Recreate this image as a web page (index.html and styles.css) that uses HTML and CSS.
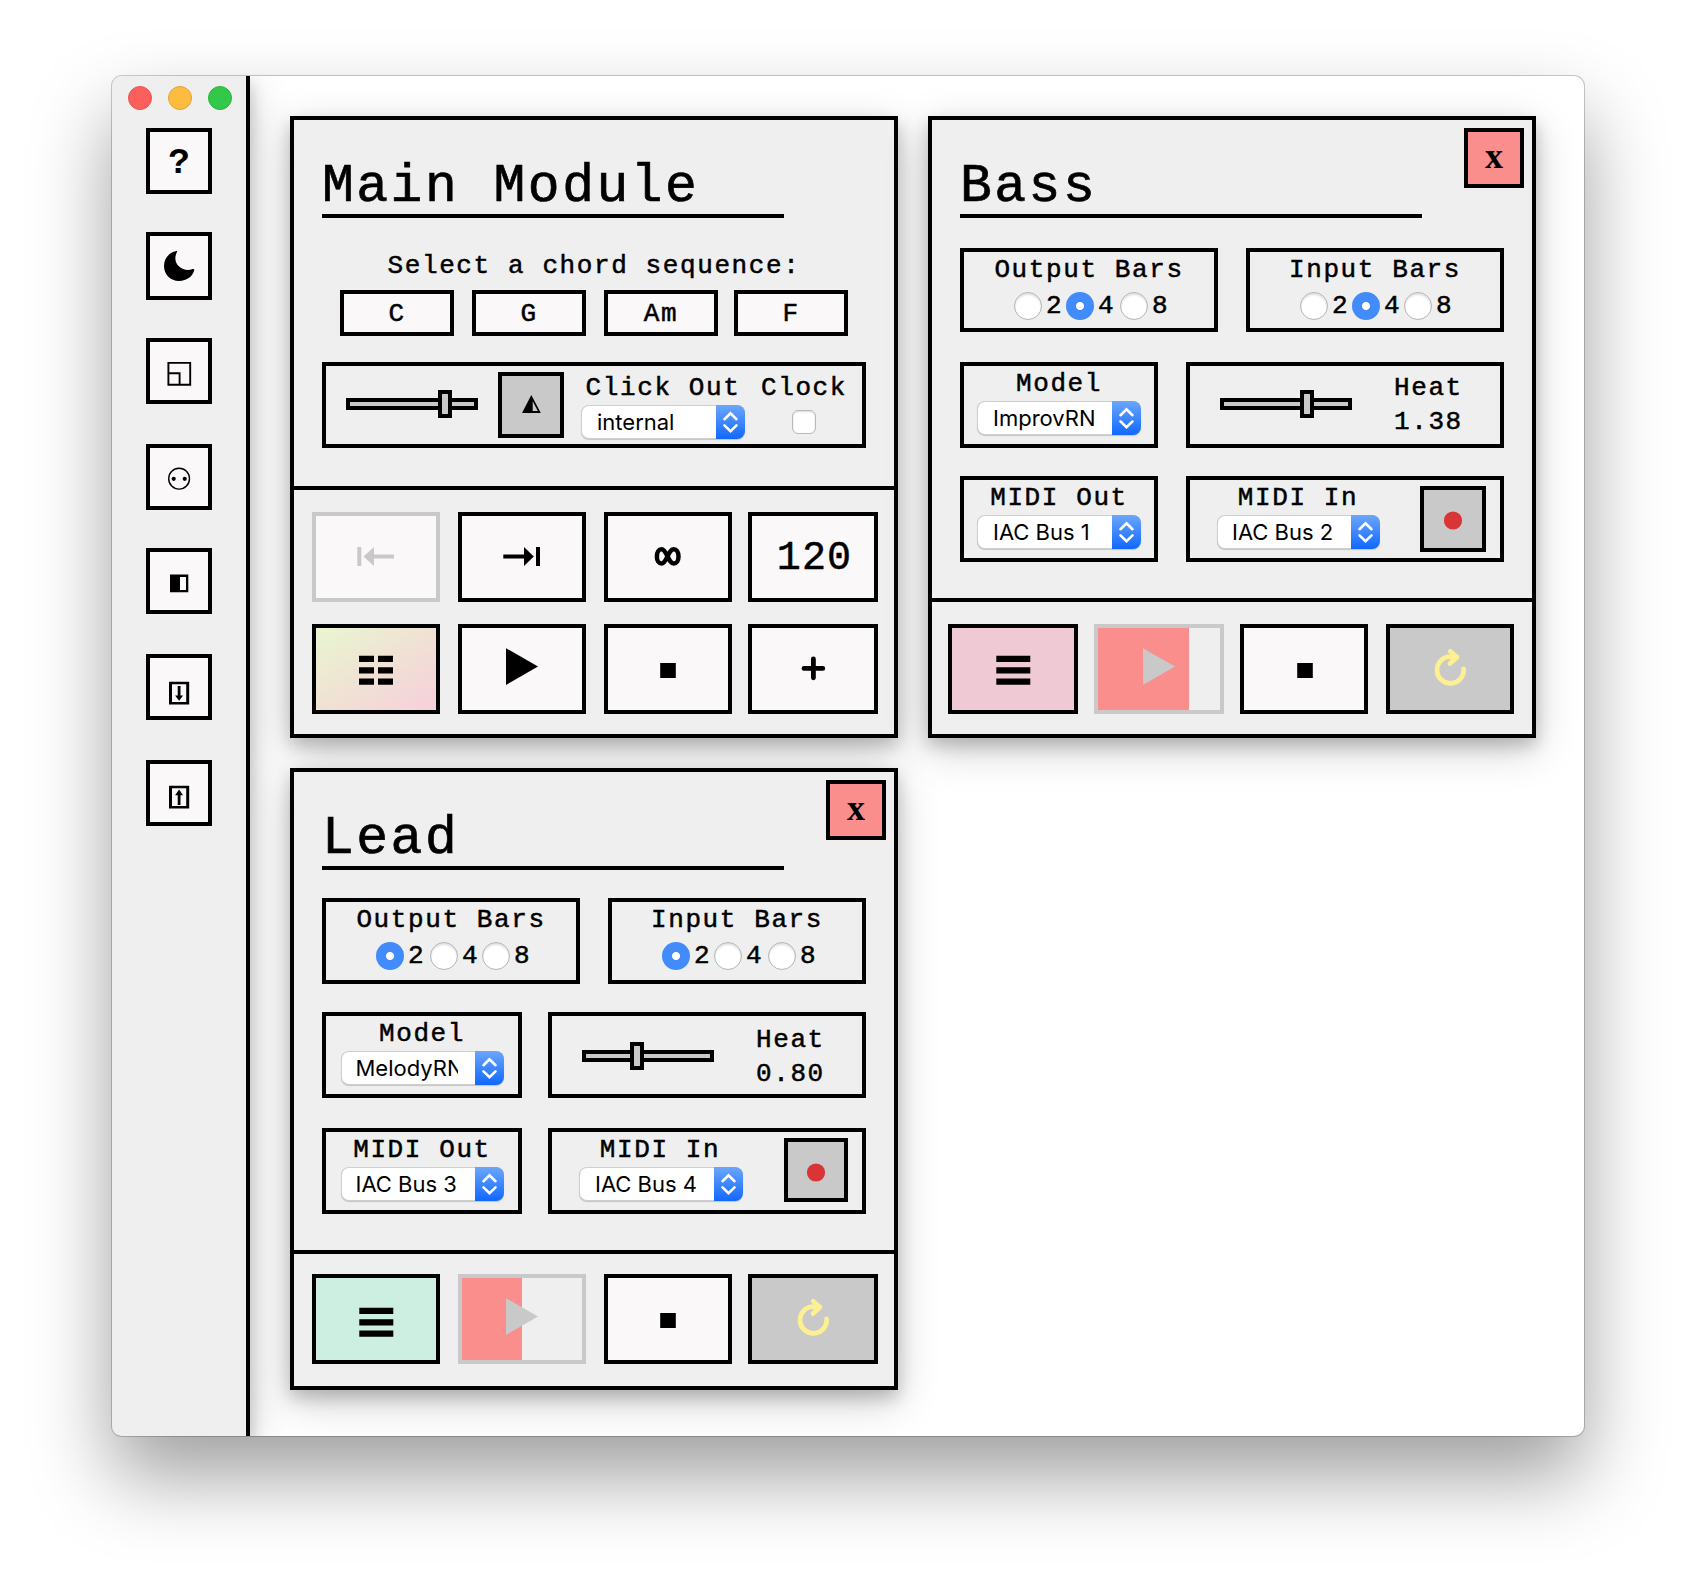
FILE: index.html
```html
<!DOCTYPE html>
<html lang="en">
<head>
<meta charset="utf-8">
<title>Modules</title>
<link rel="stylesheet" href="styles.css">
</head>
<body>
<svg class="defs" width="0" height="0">
  <symbol id="chevrons" viewBox="0 0 29 34"><path d="M8.5 14.2 14.5 8.4 20.5 14.2M8.5 20.4 14.5 26.2 20.5 20.4" fill="none" stroke="#fff" stroke-width="2.6" stroke-linecap="round"/></symbol>
  <symbol id="lines" viewBox="0 0 120 82"><path d="M43.3 27.7h34v6.2h-34zM43.3 39.2h34v6.2h-34zM43.3 50.6h34v6.2h-34z"/></symbol>
  <symbol id="play" viewBox="0 0 120 82"><path d="M44 20.2 76 38.6 44 57z"/></symbol>
  <symbol id="stop" viewBox="0 0 120 82"><path d="M52.2 35h15.6v15H52.2z"/></symbol>
  <symbol id="loop" viewBox="0 0 120 82"><path d="M73.6 41A13.3 13.3 0 1 1 60.3 28.7L67 29M60.2 23.3 67 29.2 60 35.6" fill="none" stroke="#fcf093" stroke-width="4.8" stroke-linecap="round" stroke-linejoin="round"/></symbol>
  <symbol id="record" viewBox="0 0 58 58"><circle cx="29" cy="30.5" r="9.1" fill="#d93436"/></symbol>
</svg>
<div class="window">
  <nav class="sidebar">
    <div class="lights"><i class="red"></i><i class="amber"></i><i class="green"></i></div>
    <button class="tool help">?</button>
    <button class="tool tall"><svg viewBox="0 0 58 60"><path d="M26.3 15.1C18.5 16.5 14 23 14 30C14 38.5 20.5 45 29 45C37 45 43 40 44.2 34.3C44.4 33.2 43.6 32.7 42.6 33C33 37 21 27.5 26.9 16.3C27.3 15.4 27.2 14.9 26.3 15.1Z"/></svg></button>
    <button class="tool"><svg viewBox="0 0 58 58"><path d="M18.4 20.9h21.8v21.8H18.4zM18.4 31.3h11.2v11.4" fill="none" stroke="#000" stroke-width="1.9"/></svg></button>
    <button class="tool"><svg viewBox="0 0 58 58"><circle cx="29.1" cy="30.7" r="10.4" fill="none" stroke="#000" stroke-width="1.4"/><circle cx="23.7" cy="30.8" r="2.1"/><circle cx="34.7" cy="30.8" r="2.1"/></svg></button>
    <button class="tool"><svg viewBox="0 0 58 58"><path d="M20 22.5h18.3v17.8H20zM30 25v13h6V25z" fill-rule="evenodd"/></svg></button>
    <button class="tool late"><svg viewBox="0 0 58 58"><path d="M19 23.8h20.2v22.8H19zM22 26.3v17.8h14.2V26.3zM27.7 28h2.8v9.5h2.6L29.1 42.7 25.1 37.5h2.6z" fill-rule="evenodd"/></svg></button>
    <button class="tool late"><svg viewBox="0 0 58 58"><path d="M19 21.8h20.2v22.8H19zM22 24.3v17.8h14.2V24.3zM27.7 41h2.8v-9.8h2.6L29.1 25.5 25.1 31.2h2.6z" fill-rule="evenodd"/></svg></button>
  </nav>
  <main class="modules">
    <section class="module main">
      <div class="body">
        <h1>Main Module</h1>
        <div class="label prompt">Select a chord sequence:</div>
        <div class="chords"><div>C</div><div>G</div><div>Am</div><div>F</div></div>
        <div class="box click">
          <div class="slider"><span class="thumb" style="left: 88px"></span></div>
          <button class="square"><svg viewBox="0 0 58 58"><path d="M29.3 19 38.8 37H20zM30.7 25.2V35H35.8z" fill-rule="evenodd"/></svg></button>
          <div class="col"><div class="label">Click Out</div><div class="select"><span>internal</span><b><svg><use href="#chevrons"/></svg></b></div></div>
          <div class="col clock"><div class="label">Clock</div><div class="check"></div></div>
        </div>
      </div>
      <div class="transport">
        <button class="off"><svg viewBox="0 0 120 82"><path d="M41.3 31h4v19h-4zM47.5 40.5 58 31v7.6h20v3.8H58V50z"/></svg></button>
        <button><svg viewBox="0 0 120 82"><path d="M78 31h-4v19h4zM71.8 40.5 62 31v7.6H41.3v3.8H62V50z"/></svg></button>
        <button><svg viewBox="0 0 120 82"><path d="M48.9 40.4C48.9 36 50.8 33.3 53.6 33.3C58.8 33.3 60.2 47.5 65.7 47.5C68.6 47.5 70.5 44.8 70.5 40.4C70.5 36 68.6 33.3 65.7 33.3C60.2 33.3 58.8 47.5 53.6 47.5C50.8 47.5 48.9 44.8 48.9 40.4Z" fill="none" stroke="#000" stroke-width="4.5"/></svg></button>
        <button class="tempo">120</button>
        <button class="blend"><svg viewBox="0 0 120 82"><path d="M43 27.8h15V34H43zM62 27.8h15V34H62zM43 39.3h15v6.2H43zM62 39.3h15v6.2H62zM43 50.6h15v6.2H43zM62 50.6h15v6.2H62z"/></svg></button>
        <button><svg><use href="#play"/></svg></button>
        <button><svg><use href="#stop"/></svg></button>
        <button><svg viewBox="0 0 120 82"><path d="M60.4 31v18.8M51 40.4h18.8" stroke="#000" stroke-width="4.8" stroke-linecap="round"/></svg></button>
      </div>
    </section>

    <section class="module bass">
      <button class="close">x</button>
      <div class="body">
        <h1>Bass</h1>
        <div class="row bars">
          <div class="box"><div class="label">Output Bars</div><div class="radios"><i></i><span>2</span><i class="on"></i><span>4</span><i class="push"></i><span>8</span></div></div>
          <div class="box"><div class="label">Input Bars</div><div class="radios"><i></i><span>2</span><i class="on"></i><span>4</span><i></i><span>8</span></div></div>
        </div>
        <div class="row model">
          <div class="box"><div class="label">Model</div><div class="select"><span>ImprovRN</span><b><svg><use href="#chevrons"/></svg></b></div></div>
          <div class="box heat"><div class="slider"><span class="thumb" style="left: 76px"></span></div><div class="value">Heat<br>1.38</div></div>
        </div>
        <div class="row midi">
          <div class="box"><div class="label">MIDI Out</div><div class="select"><span>IAC Bus 1</span><b><svg><use href="#chevrons"/></svg></b></div></div>
          <div class="box in"><div class="col"><div class="label">MIDI In</div><div class="select narrow"><span>IAC Bus 2</span><b><svg><use href="#chevrons"/></svg></b></div></div><button class="square"><svg><use href="#record"/></svg></button></div>
        </div>
      </div>
      <div class="transport">
        <button class="menu"><svg><use href="#lines"/></svg></button>
        <button class="off playing"><span class="progress" style="width: 91px"></span><svg><use href="#play"/></svg></button>
        <button class="halt"><svg><use href="#stop"/></svg></button>
        <button class="grey"><svg><use href="#loop"/></svg></button>
      </div>
    </section>

    <section class="module lead">
      <button class="close">x</button>
      <div class="body">
        <h1>Lead</h1>
        <div class="row bars">
          <div class="box"><div class="label">Output Bars</div><div class="radios"><i class="on"></i><span>2</span><i class="push"></i><span>4</span><i></i><span>8</span></div></div>
          <div class="box"><div class="label">Input Bars</div><div class="radios"><i class="on"></i><span>2</span><i></i><span>4</span><i class="push"></i><span>8</span></div></div>
        </div>
        <div class="row model">
          <div class="box"><div class="label">Model</div><div class="select narrow"><span>MelodyRN</span><b><svg><use href="#chevrons"/></svg></b></div></div>
          <div class="box heat"><div class="slider"><span class="thumb" style="left: 44px"></span></div><div class="value">Heat<br>0.80</div></div>
        </div>
        <div class="row midi">
          <div class="box"><div class="label">MIDI Out</div><div class="select narrow"><span>IAC Bus 3</span><b><svg><use href="#chevrons"/></svg></b></div></div>
          <div class="box in"><div class="col"><div class="label">MIDI In</div><div class="select"><span>IAC Bus 4</span><b><svg><use href="#chevrons"/></svg></b></div></div><button class="square"><svg><use href="#record"/></svg></button></div>
        </div>
      </div>
      <div class="transport">
        <button class="menu"><svg><use href="#lines"/></svg></button>
        <button class="off playing"><span class="progress" style="width: 60px"></span><svg><use href="#play"/></svg></button>
        <button><svg><use href="#stop"/></svg></button>
        <button class="grey"><svg><use href="#loop"/></svg></button>
      </div>
    </section>
  </main>
</div>
</body>
</html>
```
FILE: styles.css
```css
* { box-sizing: border-box; }

body {
  margin: 0;
  height: 1584px;
  padding: 76px 112px 0;
  background: #fff;
  color: #000;
  font-family: "Liberation Mono", monospace;
  font-size: 26px;
  letter-spacing: 1.6px;
  overflow: hidden;
}

.defs { position: absolute; }

svg { display: block; flex: none; }

button {
  display: flex;
  align-items: center;
  justify-content: center;
  padding: 0;
  border: 4px solid #000;
  border-radius: 0;
  background: #faf8f9;
  color: #000;
  font: inherit;
}

.window {
  display: flex;
  width: 1472px;
  height: 1360px;
  border-radius: 10px;
  background: #fff;
  overflow: hidden;
  box-shadow: 0 0 0 1px rgba(0, 0, 0, .2), 0 40px 80px rgba(0, 0, 0, .38);
}

/* Sidebar */
.sidebar {
  display: flex;
  flex-direction: column;
  align-items: center;
  gap: 38px;
  width: 138px;
  padding-top: 10px;
  border-right: 4px solid #000;
  background: #efefef;
  box-shadow: 0 8px 16px rgba(0, 0, 0, .2), 0 12px 40px rgba(0, 0, 0, .19);
}

.lights {
  display: flex;
  gap: 16px;
  margin: 0 0 -20px 2px;
  height: 24px;
  width: 104px;
}

.lights i { width: 24px; height: 24px; border-radius: 50%; border: 1px solid; }
.lights .red { background: #fc605c; border-color: #e9534f; }
.lights .amber { background: #fdbc40; border-color: #e3a233; }
.lights .green { background: #34c84a; border-color: #29b33c; }

.tool { width: 66px; height: 66px; }
.tool svg { width: 58px; height: 58px; }
.tool.tall { height: 68px; }
.tool.tall svg { height: 60px; }
.tool.late { margin-top: 2px; }
.tool:nth-child(5) { margin-top: 2px; }
.tool.help { padding-top: 5px; font-size: 36px; font-weight: bold; letter-spacing: 0; }

/* Module grid */
.modules {
  flex: 1;
  display: grid;
  grid-template-columns: 608px 608px;
  grid-auto-rows: 622px;
  gap: 30px;
  padding: 40px;
}

.module {
  position: relative;
  border: 4px solid #000;
  background: #efefef;
  box-shadow: 0 8px 16px rgba(0, 0, 0, .2), 0 12px 40px rgba(0, 0, 0, .19);
}

.body { height: 482px; padding: 38px 28px 0; border-bottom: 4px solid #000; }
.main .body { height: 370px; }

h1 {
  width: 462px;
  height: 60px;
  margin: 0;
  border-bottom: 4px solid #000;
  font-size: 53px;
  font-weight: normal;
  line-height: 58px;
  letter-spacing: 2.5px;
  -webkit-text-stroke: .7px #000;
}

.close {
  position: absolute;
  top: 8px;
  right: 8px;
  width: 60px;
  height: 60px;
  background: #f98e8d;
  font-family: "Liberation Serif", serif;
  font-size: 36px;
  font-weight: bold;
  line-height: 40px;
  letter-spacing: 0;
  padding-bottom: 5px;
}

.label { line-height: 28px; padding-bottom: 2px; text-align: center; white-space: nowrap; }
.label, .value, .radios span, .chords, .tempo { -webkit-text-stroke: .5px #000; }
.box { height: 86px; border: 4px solid #000; padding-top: 4px; }

.prompt { margin-top: 34px; }
.chords { display: grid; grid-template-columns: 114px 114px 114px 114px; gap: 18px; width: 508px; margin: 8px 0 26px 18px; }
.chords div { height: 46px; border: 4px solid #000; background: #faf8f9; line-height: 40px; text-align: center; }
.chords div:last-child { margin: 0 2px 0 -2px; }

.click { display: flex; padding: 0 0 0 20px; }
.click .square { margin: 6px 17px 0 20px; }
.col { width: 164px; }
.click .col { padding-top: 8px; margin-right: 15px; }
.click .clock { width: 88px; margin: 0; }

.slider { position: relative; flex: none; width: 132px; height: 12px; margin-top: 32px; border: 4px solid #000; background: #c9c9c9; }
.thumb { position: absolute; top: -12px; width: 14px; height: 28px; border: 4px solid #000; background: #c9c9c9; }

.square { flex: none; width: 66px; height: 66px; background: #c9c9c9; }
.square svg { width: 58px; height: 58px; }

.check { width: 24px; height: 24px; margin: 6px auto 0; border: 1px solid #b9b9b9; border-radius: 6px; background: #fff; box-shadow: inset 0 1px 2px rgba(0, 0, 0, .15); }

.select {
  display: flex;
  width: 162px;
  height: 32px;
  margin: 2px auto 0;
  padding-left: 15px;
  border-radius: 7px;
  background: #fff;
  box-shadow: 0 0 0 1px #cfcfcf, 0 1px 1px 1px rgba(0, 0, 0, .18);
  font: 22px/32px Inter, sans-serif;
  letter-spacing: 0;
}

.select.narrow { width: 161px; padding-left: 14px; }
.select span { flex: none; width: 102px; overflow: hidden; white-space: nowrap; }
.select b { width: 29px; height: 34px; margin: -1px -1px 0 auto; border-radius: 0 8px 8px 0; background: linear-gradient(#6ba6fa, #1168ff); }
.select svg { width: 29px; height: 34px; }

.row { display: flex; justify-content: space-between; }
.bars .box { width: 258px; }
.bass .bars { margin-top: 30px; }
.bass .bars .box { height: 84px; }
.bass .model { margin-top: 30px; }
.bass .midi { margin-top: 28px; }
.lead .bars, .lead .model { margin-top: 28px; }
.lead .midi { margin-top: 30px; }
.bass .row:not(.bars) .box:first-child { width: 198px; }
.lead .row:not(.bars) .box:first-child { width: 200px; }
.row .heat, .row .in { width: 318px; }

.radios { display: flex; width: 162px; height: 28px; margin: 6px 0 0 50px; }
.radios i { flex: none; width: 28px; height: 28px; border: 1px solid #b4b4b4; border-radius: 50%; background: #fff; box-shadow: inset 0 2px 2px rgba(0, 0, 0, .12); }
.radios i.on { border: 0; background: radial-gradient(circle, #fff 3.6px, #418bfb 4.4px); box-shadow: none; }
.radios i.push { margin-left: 2px; }
.radios span { flex: none; width: 24px; padding-left: 4px; line-height: 28px; letter-spacing: 0; }

.heat { display: flex; padding: 0 0 0 30px; }
.value { margin-left: 42px; padding-top: 5px; line-height: 34px; }
.lead .heat { padding-top: 2px; }
.in { display: flex; padding: 0 0 0 27px; }
.in .col { padding-top: 4px; }
.in .label { padding-right: 2px; }
.bass .in .select { margin-left: 1px; }
.bass .in .square { margin: 6px 0 0 39px; }
.lead .in .square { width: 64px; height: 64px; margin: 6px 0 0 41px; }
.lead .in .square svg { margin-top: 1px; }

/* Transport buttons */
.transport { display: grid; grid-template-columns: 128px 128px 128px 130px; column-gap: 18px; row-gap: 22px; padding: 22px 0 0 18px; }
.transport button { height: 90px; overflow: hidden; }
.transport button:nth-child(4n) { margin-left: -2px; width: 130px; }
.bass .transport { grid-template-columns: 130px 130px 128px 128px; column-gap: 16px; padding-left: 16px; }
.bass .transport button:nth-child(4n) { margin-left: 2px; width: 128px; }
.lead .transport { padding-top: 20px; }
.transport svg { width: 120px; height: 82px; }
.transport .off { border-color: #c9c9c9; fill: #c9c9c9; }
.playing { position: relative; background: #efefef; }
.playing svg { position: relative; }
.progress { position: absolute; top: 0; left: 0; height: 82px; background: #f98e8d; }
.transport .tempo { padding: 3px 0 0 3px; font-size: 40px; letter-spacing: 1.2px; }
.blend { background: linear-gradient(145deg, #e9f6d0, #f0e2d4 50%, #f7cfdb); }
.grey { background: #c9c9c9; }
.bass .menu { background: #efcad4; }
.bass .halt { padding-left: 1px; }
.lead .menu { background: #cdefe2; }
.lead .menu svg { margin-top: 4px; }
```
